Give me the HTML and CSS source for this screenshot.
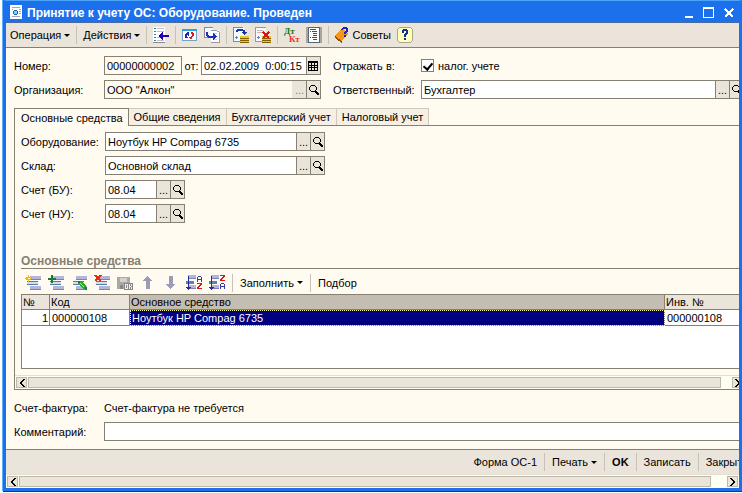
FILE: index.html
```html
<!DOCTYPE html>
<html lang="ru">
<head>
  <meta charset="UTF-8">
  <meta name="viewport" content="width=device-width, initial-scale=1">
  <title>Принятие к учету ОС: Оборудование. Проведен</title>
  <link rel="stylesheet" href="styles.css">
</head>
<body>

  <svg class="defs" aria-hidden="true">
    <symbol id="lens" viewBox="0 0 12 12">
      <path d="M3 1h4v1h1v1h1v3h-1v1h-1v1h-4v-1h-1v-1h-1v-3h1v-1h1z" fill="#000"/>
      <path d="M3 2h4v1h1v3h-1v1h-4v-1h-1v-3h1z" fill="#ebe4da"/>
      <path d="M7 7h2v1h1v1h1v2h-2v-1h-1v-1h-1z" fill="#000"/>
    </symbol>
    <symbol id="rows" viewBox="0 0 16 16">
      <path d="M5 1h11v4H5zM5 11h11v4H5z" fill="#b4b4dc"/>
      <path d="M2 6h11v4H2z" fill="#d8dcec"/>
      <path d="M5 4h11v1H5zM5 14h11v1H5z" fill="#8080b8"/>
      <path d="M2 6h11v1H2zM2 9h11v1H2z" fill="#5080a0"/>
    </symbol>
    <symbol id="sortrows" viewBox="0 0 16 16">
      <path d="M2 0h8v4H2zM2 10h8v4H2z" fill="#b4b4dc"/>
      <path d="M0 6h8v3H0z" fill="#5888a8"/>
      <path d="M2 3h8v1H2zM2 13h8v1H2z" fill="#8080b8"/>
      <path d="M2 1h1v11h2v1H4v1H3v1H2v-1H1v-1H0v-1h2z" fill="#2828a0"/>
    </symbol>
    <symbol id="left" viewBox="0 0 6 8">
      <path d="M4 0h2v1H5v1H4v1H3v2h1v1h1v1h1v1H4V7H3V6H2V5H1V3h1V2h1V1h1z"/>
    </symbol>
    <symbol id="right" viewBox="0 0 6 8">
      <path d="M0 0h2v1h1v1h1v1h1v2H4v1H3v1H2v1H0V7h1V6h1V5h1V3H2V2H1V1H0z"/>
    </symbol>
  </svg>

  <div class="window">
    <header class="titlebar">
      <svg width="13" height="15" viewBox="0 0 13 15">
        <path d="M0 0h12v14H0z" fill="#fff"/>
        <path d="M2 2h8v1H2zM2 4h1v1H2zM9 4h2v1H9zM9 6h2v1H9zM9 8h2v1H9zM2 11h8v1H2z" fill="#9ab"/>
        <path d="M4 5h3v1h1v3H7v1H4V9H3V6h1z" fill="#1864a0"/>
        <path d="M4 6h3v3H4z" fill="#8cf"/>
      </svg>
      <h1>Принятие к учету ОС: Оборудование. Проведен</h1>
      <div class="window-buttons">
        <button aria-label="Свернуть"><svg width="12" height="12"><path d="M2 9h8v2H2z" fill="#fff"/></svg></button>
        <button aria-label="Развернуть"><svg width="12" height="12"><path d="M0 0h11v11H0zM1 2v8h9V2z" fill="#fff" fill-rule="evenodd"/></svg></button>
        <button aria-label="Закрыть окно"><svg width="12" height="12"><path d="M2 2l8 8M10 2l-8 8" stroke="#fff" stroke-width="2"/></svg></button>
      </div>
    </header>

    <nav class="toolbar">
      <button class="menu">Операция <i class="arrow"></i></button>
      <span class="sep"></span>
      <button class="menu">Действия <i class="arrow"></i></button>
      <span class="sep"></span>
      <button class="icon" aria-label="Перейти">
        <svg width="16" height="16">
          <path d="M0 0h12v16H0z" fill="#fff"/>
          <path d="M1 1h2v1H1zM1 4h2v1H1zM1 7h2v1H1zM1 10h2v1H1zM1 13h2v1H1z" fill="#28a"/>
          <path d="M4 1h7v1H4zM4 4h7v1H4zM4 10h7v1H4zM4 13h7v1H4z" fill="#b8c0cc"/>
          <path d="M0 15h12v1H0z" fill="#889"/>
          <path d="M6 8h1V7h1V6h1V5h1v3h6v2h-6v3H9v-1H8v-1H7v-1H6z" fill="#2000b0"/>
        </svg>
      </button>
      <span class="sep"></span>
      <button class="icon" aria-label="Обновить">
        <svg width="16" height="16">
          <path d="M1 2h14v12H1z" fill="#fff"/>
          <path d="M0 2h1v12H0zM0 13h15v1H0zM14 2h1v12h-1z" fill="#79a0c8"/>
          <path d="M0 2h15v2H0z" fill="#30a0e0"/>
          <path d="M3 10V7h1V6h1V5h2v4H6V8H5v2z" fill="#2424b0"/>
          <path d="M3 10h3v1H3z" fill="#2424b0"/>
          <path d="M9 5h2v1h1v3h-1v1h-1v2H8v-1H7v-1h2V9h1V7H9z" fill="#d02020"/>
        </svg>
      </button>
      <button class="icon" aria-label="Скопировать">
        <svg width="16" height="16">
          <path d="M0 0h9v11H0z" fill="#f4f8ff"/>
          <path d="M0 0h9v1H1v9h5v1H0z" fill="#889"/>
          <path d="M7 3h8v12H7z" fill="#fff"/>
          <path d="M7 3h6v1h2v1h1v11H7v-1h8V5h-2V4H7z" fill="#99a"/>
          <path d="M9 6h4v1H9zM9 12h4v1H9z" fill="#bcd"/>
          <path d="M2 5h2v3h1v1h4V6h1v1h1v1h1v1h1v1h-1v1h-1v1h-1v1H9v-2H4v-1H3V9H2z" fill="#2030b8"/>
        </svg>
      </button>
      <span class="sep"></span>
      <button class="icon" aria-label="Провести">
        <svg width="16" height="16">
          <path d="M0 0h11v15H0z" fill="#f4f8ff"/>
          <path d="M0 0h10v1H1v13h6v1H0z" fill="#889"/>
          <path d="M2 10h3v1H2zM3 9h1v3H3z" fill="#58a"/>
          <path d="M7 9h9v7H7z" fill="#e8c820"/>
          <path d="M7 11h9v1H7zM7 13h9v1H7zM7 15h9v1H7z" fill="#806000"/>
          <path d="M3 5V3h1V2h6v1h2v2h2v1h-1v1h-1v1h-1V7h-1V6H9V5h1V4H5v1z" fill="#1838a0"/>
        </svg>
      </button>
      <button class="icon" aria-label="Отмена проведения">
        <svg width="16" height="16">
          <path d="M0 0h11v15H0z" fill="#f8f8f8"/>
          <path d="M0 0h11v1H1v13h6v1H0z" fill="#999"/>
          <path d="M2 3h6v1H2zM2 5h6v1H2z" fill="#bbb"/>
          <path d="M2 10h3v1H2zM3 9h1v3H3z" fill="#77b"/>
          <path d="M7 9h9v7H7z" fill="#e8c820"/>
          <path d="M7 11h9v1H7zM7 13h9v1H7zM7 15h9v1H7z" fill="#806000"/>
          <path d="M8 5l6 6M14 5l-6 6" stroke="#d81810" stroke-width="2"/>
        </svg>
      </button>
      <span class="sep"></span>
      <button class="icon" aria-label="Дт Кт">
        <svg width="16" height="16" class="serif">
          <text x="0" y="7" fill="#187818" font-size="9">Дт</text>
          <text x="5" y="15" fill="#f03030" font-size="9">Кт</text>
        </svg>
      </button>
      <button class="icon" aria-label="Структура">
        <svg width="16" height="16">
          <path d="M0 0h16v16H0z" fill="#aaa69e"/>
          <path d="M2 0h12v16H2z" fill="#fff"/>
          <path d="M2 0h12v16H2zM3 1v14h10V1z" fill="#567" fill-rule="evenodd"/>
          <path d="M4 2h6v1H4zM6 4h5v1H6zM7 6h4v1H7zM7 8h4v1H7zM6 10h5v1H6zM7 12h4v1H7zM4 4h1v1H4zM4 10h1v1H4z" fill="#146090"/>
        </svg>
      </button>
      <span class="sep"></span>
      <button class="menu tips">
        <svg width="16" height="16">
          <path d="M0 9l7-8 6 6-6 8z" fill="#f09820"/>
          <path d="M0 9l7 5v2L0 11z" fill="#a04800"/>
          <path d="M7 14l6-7v2l-6 7z" fill="#ffe8a0"/>
          <path d="M6 2h1V1h1V0h4v1h1v4h-1v1h-1v1H9V5h1V4h1V2H8v1H6zM9 8h2v2H9z" fill="#2020c0"/>
        </svg>
        Советы
      </button>
      <button class="icon" aria-label="Справка">
        <svg width="16" height="16">
          <path d="M2 0h12v1h1v1h1v12h-1v1h-1v1H2v-1H1v-1H0V2h1V1h1z" fill="#a8a890"/>
          <path d="M2 1h12v1h1v12h-1v1H2v-1H1V2h1z" fill="#ffffb8"/>
          <path d="M5 3h1V2h4v1h1v4h-1v1H9v2H7V7h1V6h1V4H7v2H5zM7 11h2v2H7z" fill="#103090"/>
        </svg>
      </button>
    </nav>

    <main class="form">
      <div class="head-grid">
        <label for="number">Номер:</label>
        <div class="pair">
          <input class="box number" id="number" value="00000000002">
          <label for="date">от:</label>
          <div class="field date">
            <input id="date" value="02.02.2009  0:00:15">
            <button aria-label="Календарь">
              <svg width="12" height="12"><path d="M1 1h10v10H1zM2 3v2h2V3zM5 3v2h2V3zM8 3v2h2V3zM2 6v1h2V6zM5 6v1h2V6zM8 6v1h2V6zM2 8v2h2V8zM5 8v2h2V8zM8 8v2h2V8z" fill-rule="evenodd"/></svg>
            </button>
          </div>
        </div>
        <span>Отражать в:</span>
        <label class="check"><input type="checkbox" checked> налог. учете</label>

        <label for="org">Организация:</label>
        <div class="field readonly">
          <input id="org" value='ООО "Алкон"' readonly>
          <button disabled aria-label="Выбрать">...</button>
          <button aria-label="Открыть"><svg width="12" height="12"><use href="#lens"/></svg></button>
        </div>
        <label for="person">Ответственный:</label>
        <div class="field">
          <input id="person" value="Бухгалтер">
          <button aria-label="Выбрать">...</button>
          <button aria-label="Открыть"><svg width="12" height="12"><use href="#lens"/></svg></button>
        </div>
      </div>

      <div class="tabs" role="tablist">
        <button class="active" role="tab" aria-selected="true">Основные средства</button>
        <button role="tab">Общие сведения</button>
        <button role="tab">Бухгалтерский учет</button>
        <button role="tab">Налоговый учет</button>
      </div>

      <section class="panel">
        <div class="panel-body">
          <div class="panel-row">
            <label for="equip">Оборудование:</label>
            <div class="field wide">
              <input id="equip" value="Ноутбук HP Compag 6735">
              <button aria-label="Выбрать">...</button>
              <button aria-label="Открыть"><svg width="12" height="12"><use href="#lens"/></svg></button>
            </div>
          </div>
          <div class="panel-row">
            <label for="store">Склад:</label>
            <div class="field wide">
              <input id="store" value="Основной склад">
              <button aria-label="Выбрать">...</button>
              <button aria-label="Открыть"><svg width="12" height="12"><use href="#lens"/></svg></button>
            </div>
          </div>
          <div class="panel-row">
            <label for="acc-bu">Счет (БУ):</label>
            <div class="field short">
              <input id="acc-bu" value="08.04">
              <button aria-label="Выбрать">...</button>
              <button aria-label="Открыть"><svg width="12" height="12"><use href="#lens"/></svg></button>
            </div>
          </div>
          <div class="panel-row">
            <label for="acc-nu">Счет (НУ):</label>
            <div class="field short">
              <input id="acc-nu" value="08.04">
              <button aria-label="Выбрать">...</button>
              <button aria-label="Открыть"><svg width="12" height="12"><use href="#lens"/></svg></button>
            </div>
          </div>

          <h2>Основные средства</h2>

          <div class="table-tools">
            <button class="icon" aria-label="Добавить">
              <svg width="16" height="16"><use href="#rows"/><path d="M3 0h1v2h2v1h1v1H6v1H4v2H3V5H1V4H0V3h1V2h2z" fill="#f0b800"/><path d="M3 3h2v1H3z" fill="#fffbd0"/></svg>
            </button>
            <button class="icon" aria-label="Скопировать строку">
              <svg width="16" height="16"><use href="#rows"/><path d="M3 0h2v3h3v2H5v3H3V5H0V3h3z" fill="#108030"/></svg>
            </button>
            <button class="icon" aria-label="Изменить">
              <svg width="16" height="16"><use href="#rows"/><path d="M7 6h3l5 5v3h-3L7 9z" fill="#20b020"/><path d="M7 6h2v2H7zM14 12h2v3h-2z" fill="#084"/><path d="M9 8l4 4" stroke="#f0e020"/></svg>
            </button>
            <button class="icon" aria-label="Удалить">
              <svg width="16" height="16"><use href="#rows"/><path d="M1 0l6 6M7 0l-6 6" stroke="#d83010" stroke-width="2"/></svg>
            </button>
            <button class="icon" disabled aria-label="Закончить редактирование">
              <svg width="16" height="16">
                <path d="M0 2h13v12H0z" fill="#aaa8a4"/><path d="M3 3h7v4H3z" fill="#d4d0c8"/><path d="M3 10h3v4H3z" fill="#888"/>
                <path d="M7 8h9v7H7z" fill="#888"/><path d="M8 9h3v5H8zM9 10v3h1v-3zM12 9h1v2h1V9h1v2h-1v1h1v2h-1v-2h-1v2h-1z" fill="#eee" fill-rule="evenodd"/>
              </svg>
            </button>
            <button class="icon" aria-label="Вверх">
              <svg width="16" height="16"><path d="M7 1h1v1h1v1h1v1h1v1h1v1h-2v8H6V6H3V5h1V4h1V3h1V2h1z" fill="#9c9cb4"/></svg>
            </button>
            <button class="icon" aria-label="Вниз">
              <svg width="16" height="16"><path d="M7 14h1v-1h1v-1h1v-1h1v-1h1V9h-2V1H6v8H3v1h1v1h1v1h1v1h1z" fill="#9c9cb4"/></svg>
            </button>
            <button class="icon" aria-label="Сортировать по возрастанию">
              <svg width="16" height="16"><use href="#sortrows"/><path d="M12 1h3v1h1v5h-1V5h-3v2h-1V2h1zM12 2v2h3V2z" fill="#3838a0" fill-rule="evenodd"/><path d="M11 8h5v2h-1v1h-1v1h-1v1h3v1h-5v-2h1v-1h1v-1h1V9h-3z" fill="#d01820"/></svg>
            </button>
            <button class="icon" aria-label="Сортировать по убыванию">
              <svg width="16" height="16"><use href="#sortrows"/><path d="M11 0h5v2h-1v1h-1v1h-1v1h3v1h-5V4h1V3h1V2h1V1h-3z" fill="#d01820"/><path d="M12 8h3v1h1v5h-1v-2h-3v2h-1V9h1zM12 9v2h3V9z" fill="#3838a0" fill-rule="evenodd"/></svg>
            </button>
            <span class="sep"></span>
            <button class="menu">Заполнить <i class="arrow"></i></button>
            <span class="sep"></span>
            <button class="menu">Подбор</button>
          </div>

          <div class="table-box">
            <table>
              <colgroup>
                <col class="col-num"><col class="col-code"><col><col class="col-inv">
              </colgroup>
              <thead>
                <tr><th>№</th><th>Код</th><th class="current">Основное средство</th><th>Инв. №</th></tr>
              </thead>
              <tbody>
                <tr><td class="num">1</td><td>000000108</td><td class="selected">Ноутбук HP Compag 6735</td><td>000000108</td></tr>
              </tbody>
            </table>
          </div>
        </div>

        <div class="scrollbar">
          <button aria-label="Влево"><svg width="6" height="8"><use href="#left"/></svg></button>
          <div class="thumb"></div>
          <button aria-label="Вправо"><svg width="6" height="8"><use href="#right"/></svg></button>
        </div>
      </section>

      <div class="bottom-grid">
        <span>Счет-фактура:</span>
        <a href="#">Счет-фактура не требуется</a>
        <label for="comment">Комментарий:</label>
        <input class="box" id="comment">
      </div>
    </main>

    <footer class="actions">
      <button class="menu">Форма ОС-1</button>
      <span class="sep"></span>
      <button class="menu">Печать <i class="arrow"></i></button>
      <span class="sep"></span>
      <button class="menu ok">OK</button>
      <span class="sep"></span>
      <button class="menu">Записать</button>
      <span class="sep"></span>
      <button class="menu">Закрыть</button>
    </footer>

    <div class="scrollbar outer">
      <button aria-label="Влево"><svg width="6" height="8"><use href="#left"/></svg></button>
      <div class="thumb"></div>
      <button aria-label="Вправо"><svg width="6" height="8"><use href="#right"/></svg></button>
    </div>
  </div>

</body>
</html>
```
FILE: styles.css
```css
* {
  box-sizing: border-box;
}

body {
  margin: 0;
  padding: 0 0 2px 3px;
  background: #fff;
  font-family: "Liberation Sans", Arial, sans-serif;
  font-size: 11px;
  line-height: 14px;
  color: #000;
}

button,
input {
  margin: 0;
  padding: 0;
  border: none;
  border-radius: 0;
  background: none;
  font: inherit;
  color: inherit;
}

svg {
  display: block;
  flex: none;
  shape-rendering: crispEdges;
}

.defs {
  position: absolute;
  width: 0;
  height: 0;
}

/* window frame */

.window {
  display: flex;
  flex-direction: column;
  min-height: calc(100vh - 2px);
  border: 3px solid #1c70ec;
  border-top: 1px solid #4ca4f8;
  box-shadow: -1px 0 #5cb0f8, 0 1px #0838a8;
  overflow: hidden;
}

.titlebar {
  display: flex;
  align-items: center;
  gap: 4px;
  height: 22px;
  padding: 2px 4px 0;
  background: #1c70ec;
  border-bottom: 1px solid #4a6a9c;
}

.titlebar h1 {
  flex: 1;
  margin: 0;
  font-size: 12px;
  font-weight: bold;
  color: #fff;
  white-space: nowrap;
}

.window-buttons {
  display: flex;
  gap: 8px;
}

/* toolbars */

.toolbar,
.table-tools,
.actions {
  display: flex;
  align-items: center;
  gap: 6px;
  white-space: nowrap;
}

.toolbar {
  height: 25px;
  padding: 0 4px;
  background: #ebe4da;
  border-bottom: 1px solid #868073;
}

.menu {
  display: flex;
  align-items: center;
  gap: 3px;
  white-space: nowrap;
}

.tips {
  gap: 1px;
}

.arrow {
  border: 3px solid transparent;
  border-top-color: #000;
  border-bottom: none;
}

.sep {
  width: 1px;
  height: 18px;
  background: #c8c2b6;
}

.serif {
  font-family: "Liberation Serif", serif;
  font-weight: bold;
}

/* form */

.form {
  display: flex;
  flex-direction: column;
  flex: 1;
  padding: 8px 0 8px 8px;
  background: #fffbf0;
}

.head-grid {
  display: grid;
  grid-template-columns: 90px 217px 100px 1fr;
  gap: 5px 0;
  align-items: center;
  margin-right: -5px;
}

.head-grid > :nth-child(4n + 3) {
  padding-left: 12px;
}

.pair {
  display: flex;
  align-items: center;
  justify-content: space-between;
}

.box,
.field {
  height: 19px;
  border: 1px solid #868073;
  background: #fff;
}

.box {
  width: 100%;
  padding: 0 2px;
}

.number {
  width: 78px;
  background: #fffbf0;
}

.field {
  display: flex;
}

.field input {
  flex: 1;
  min-width: 0;
  padding: 0 2px;
  white-space: pre;
}

.field button {
  display: flex;
  align-items: center;
  justify-content: center;
  width: 14px;
  background: #ebe4da;
  border-left: 1px solid #868073;
}

.field button:disabled {
  color: #868073;
  border-left-color: #ebe4da;
}

.date {
  width: 120px;
}

.readonly {
  background: #fffbf0;
}

.wide {
  width: 220px;
}

.short {
  width: 80px;
}

.check {
  display: flex;
  align-items: center;
  gap: 4px;
}

.check input {
  appearance: none;
  width: 13px;
  height: 13px;
  border: 1px solid #868073;
  background: #fff;
}

.check input:checked::after {
  content: "";
  display: block;
  width: 4px;
  height: 7px;
  margin: 1px 0 0 3px;
  border: solid #000;
  border-width: 0 2px 2px 0;
  transform: rotate(40deg);
}

/* tabs */

.tabs {
  display: flex;
  align-items: flex-end;
  margin-top: 9px;
  border-bottom: 1px solid #868073;
}

.tabs button {
  height: 17px;
  padding: 0 5px;
  background: #f6f0e4;
  border: 1px solid #cfc9bc;
  border-width: 1px 1px 0 0;
  white-space: nowrap;
}

.tabs .active {
  height: 18px;
  margin-bottom: -1px;
  padding: 0 5px 0 6px;
  background: #fffbf0;
  border-color: #868073;
  border-left-width: 1px;
}

.panel {
  display: flex;
  flex-direction: column;
  flex: 1;
  border: solid #868073;
  border-width: 0 0 1px 1px;
}

.panel-body {
  display: flex;
  flex-direction: column;
  flex: 1;
  padding: 6px 0 6px 6px;
}

.panel-row {
  display: grid;
  grid-template-columns: 84px 1fr;
  align-items: center;
  margin-bottom: 5px;
}

.panel h2 {
  margin: 26px 0 0;
  border-bottom: 1px solid #868073;
  font-size: 12px;
  line-height: 14px;
  color: #868073;
}

.table-tools {
  height: 25px;
  gap: 7px;
  padding: 2px 0 0 4px;
}

/* table */

.table-box {
  flex: 1;
  min-height: 60px;
  margin-right: -10px;
  border: 1px solid #868073;
  background: #fff;
}

table {
  width: 100%;
  table-layout: fixed;
  border-collapse: separate;
  border-spacing: 0;
}

.col-num {
  width: 28px;
}

.col-code {
  width: 80px;
}

.col-inv {
  width: 83px;
}

th,
td {
  height: 16px;
  padding: 0 1px;
  border: solid #868073;
  border-width: 0 1px 1px 0;
  font-weight: normal;
  text-align: left;
  white-space: nowrap;
  overflow: hidden;
}

th {
  height: 15px;
  background: #ebe4da;
}

td {
  padding-left: 2px;
}

.current {
  background: #c4bdb2;
}

.num {
  text-align: right;
}

.selected {
  background: #000080;
  color: #fff;
  outline: 1px dotted #ffff80;
  outline-offset: -1px;
}

/* scrollbars */

.scrollbar {
  display: flex;
  gap: 1px;
  height: 14px;
  margin-right: -5px;
  padding: 1px;
  border-top: 1px solid #e4dfd0;
  background: #fffff4;
}

.scrollbar button,
.thumb {
  border: 1px solid #bdb8a8;
  background: #ebe4da;
}

.scrollbar button {
  display: flex;
  align-items: center;
  justify-content: center;
  width: 11px;
}

.thumb {
  flex: 1;
  margin-right: 10px;
}

/* bottom rows */

.bottom-grid {
  display: grid;
  grid-template-columns: 90px 1fr;
  gap: 5px 0;
  align-items: center;
  grid-auto-rows: 19px;
  margin: 8px -5px 0 0;
}

.bottom-grid a {
  color: inherit;
  text-decoration: none;
}

.actions {
  justify-content: flex-end;
  gap: 7px;
  height: 25px;
  margin-right: -9px;
  background: #ebe4da;
  border-top: 1px solid #868073;
}

.ok {
  font-weight: bold;
}

.outer {
  margin-right: 0;
}

.outer .thumb {
  margin-right: 15px;
}
```
